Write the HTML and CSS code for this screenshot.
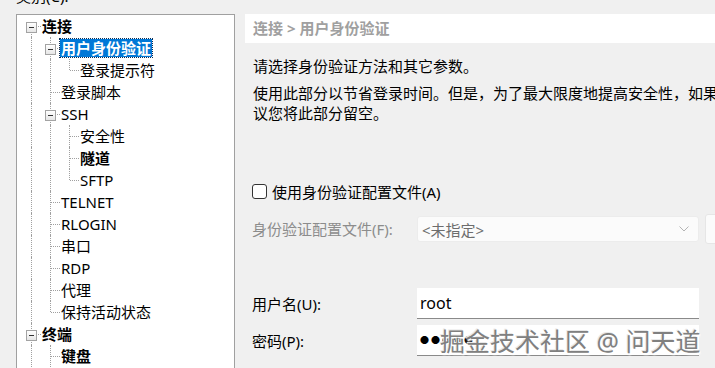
FILE: index.html
```html
<!DOCTYPE html>
<html lang="zh-CN">
<head>
    <meta charset="UTF-8">
    <link rel="stylesheet" href="styles.css">
    <title>会话属性</title>
</head>
<body>
    <div class="page">
        <div class="left">
            <div class="cap">类别(C):</div>
            <ul class="tree">
                <li class="row"><span class="g f"><span class="box"></span></span><span class="txt b">连接</span></li>
                <li class="row"><span class="g v"></span><span class="g t"><span class="box"></span></span><span class="txt b sel">用户身份验证</span></li>
                <li class="row"><span class="g v"></span><span class="g v"></span><span class="g l"></span><span class="txt">登录提示符</span></li>
                <li class="row"><span class="g v"></span><span class="g t"></span><span class="txt">登录脚本</span></li>
                <li class="row"><span class="g v"></span><span class="g t"><span class="box"></span></span><span class="txt">SSH</span></li>
                <li class="row"><span class="g v"></span><span class="g v"></span><span class="g t"></span><span class="txt">安全性</span></li>
                <li class="row"><span class="g v"></span><span class="g v"></span><span class="g t"></span><span class="txt b">隧道</span></li>
                <li class="row"><span class="g v"></span><span class="g v"></span><span class="g l"></span><span class="txt">SFTP</span></li>
                <li class="row"><span class="g v"></span><span class="g t"></span><span class="txt">TELNET</span></li>
                <li class="row"><span class="g v"></span><span class="g t"></span><span class="txt">RLOGIN</span></li>
                <li class="row"><span class="g v"></span><span class="g t"></span><span class="txt">串口</span></li>
                <li class="row"><span class="g v"></span><span class="g t"></span><span class="txt">RDP</span></li>
                <li class="row"><span class="g v"></span><span class="g t"></span><span class="txt">代理</span></li>
                <li class="row"><span class="g v"></span><span class="g l"></span><span class="txt">保持活动状态</span></li>
                <li class="row"><span class="g t"><span class="box"></span></span><span class="txt b">终端</span></li>
                <li class="row"><span class="g v"></span><span class="g t"></span><span class="txt b">键盘</span></li>
            </ul>
        </div>
        <div class="right">
            <div class="crumb">连接 &gt; 用户身份验证</div>
            <p class="intro">请选择身份验证方法和其它参数。</p>
            <p class="note">使用此部分以节省登录时间。但是，为了最大限度地提高安全性，如果您担心安全性，建<br>议您将此部分留空。</p>
            <label class="check"><span class="cb"></span>使用身份验证配置文件(A)</label>
            <div class="field dim">
                <span class="lbl">身份验证配置文件(F):</span>
                <div class="select">
                    <span>&lt;未指定&gt;</span>
                    <svg class="chev" width="10" height="6" viewBox="0 0 10 6"><path d="M0.5 0.5 L5 5 L9.5 0.5" fill="none" stroke="#b4b4b4" stroke-width="1"/></svg>
                </div>
                <div class="more"></div>
            </div>
            <div class="field user">
                <span class="lbl">用户名(U):</span>
                <div class="input">root</div>
            </div>
            <div class="field pass">
                <span class="lbl">密码(P):</span>
                <div class="input"><span class="dots">●●●●●</span><span class="mark">掘金技术社区 @ 问天道</span></div>
            </div>
        </div>
    </div>
</body>
</html>
```

FILE: styles.css
```css
body {
    margin: 0;
    height: 368px;
    overflow: hidden;
    background: #f0f0f0;
    color: #000;
    font-family: "Noto Sans", "Noto Sans CJK SC", sans-serif;
    font-size: 15px;
}

.page {
    display: flex;
    gap: 10px;
    padding-left: 16px;
}

.left {
    width: 219px;
    flex: none;
}

.cap {
    margin-top: -12px;
    height: 16px;
    line-height: 16px;
    margin-bottom: 10px;
}

.tree {
    list-style: none;
    margin: 0;
    padding: 0 0 0 5px;
    height: 400px;
    background: #fff;
    border: 1px solid #a0a0a0;
}

.row {
    display: flex;
    align-items: center;
    height: 22px;
}

/* tree guide cells */
.g {
    position: relative;
    width: 19px;
    height: 22px;
    flex: none;
}

.g::before,
.g::after {
    content: "";
    position: absolute;
}

.g.v::before,
.g.t::before {
    left: 9px;
    top: 0;
    bottom: 0;
    border-left: 1px dotted #a0a0a0;
}

.g.l::before {
    left: 9px;
    top: 0;
    height: 11px;
    border-left: 1px dotted #a0a0a0;
}

.g.f::before {
    left: 9px;
    top: 11px;
    bottom: 0;
    border-left: 1px dotted #a0a0a0;
}

.g.t::after,
.g.l::after,
.g.f::after {
    left: 10px;
    top: 11px;
    width: 9px;
    border-top: 1px dotted #a0a0a0;
}

.box {
    position: absolute;
    left: 4px;
    top: 7px;
    width: 9px;
    height: 9px;
    border: 1px solid #a3a3a3;
    background: linear-gradient(#fff, #e6e6e6);
    z-index: 1;
}

.box::before {
    content: "";
    position: absolute;
    left: 2px;
    top: 4px;
    width: 5px;
    height: 1px;
    background: #333;
}

.txt {
    line-height: 18px;
    padding: 0 1px;
    margin-left: 0;
    white-space: nowrap;
}

.b {
    font-weight: bold;
}

.sel {
    background: #0078d7;
    color: #fff;
    outline: 1px dotted #0a2c55;
}

/* right side */
.right {
    width: 540px;
    flex: none;
    padding-top: 14px;
}

.crumb {
    height: 29px;
    line-height: 29px;
    padding-left: 8px;
    background: #fff;
    color: #a0a0a0;
    font-weight: bold;
}

.intro {
    margin: 13px 0 0;
    padding-left: 8px;
    line-height: 20px;
}

.note {
    margin: 7px 0 0;
    padding-left: 8px;
    line-height: 20px;
    white-space: nowrap;
}

.check {
    display: flex;
    align-items: center;
    height: 20px;
    margin-top: 58px;
    padding-left: 7px;
}

.cb {
    width: 13px;
    height: 13px;
    margin-right: 5px;
    border: 1px solid #333;
    border-radius: 3px;
    background: #fff;
}

.field {
    display: flex;
    align-items: center;
    padding-left: 7px;
}

.lbl {
    width: 165px;
    flex: none;
    line-height: 20px;
}

.dim {
    margin-top: 13px;
    color: #8c8c8c;
}

.select {
    display: flex;
    align-items: center;
    justify-content: space-between;
    width: 280px;
    height: 24px;
    padding: 0 5px 0 4px;
    box-sizing: content-box;
    border: 1px solid #ececec;
    border-radius: 3px;
    background: #fbfbfb;
    color: #6d6d6d;
}

.select {
    width: 271px;
}

.chev {
    margin-right: 4px;
}

.more {
    width: 20px;
    height: 28px;
    margin-left: 6px;
    border: 1px solid #e6e6e6;
    border-radius: 3px;
    background: #fbfbfb;
}

.user {
    margin-top: 44px;
}

.pass {
    margin-top: 6px;
}

.input {
    position: relative;
    width: 279px;
    height: 30px;
    padding-left: 3px;
    line-height: 30px;
    background: #fff;
    border-bottom: 1px solid #8a8a8a;
    font-size: 16px;
}

.dots {
    font-size: 9px;
    letter-spacing: 2px;
    vertical-align: top;
}

.mark {
    position: absolute;
    left: 23px;
    top: 1px;
    font-size: 25px;
    line-height: 30px;
    white-space: nowrap;
    color: #808080;
    text-shadow: 1px 1px 0 #fff, -1px -1px 0 #e8e8e8, 1px 2px 2px #fff;
}
```
